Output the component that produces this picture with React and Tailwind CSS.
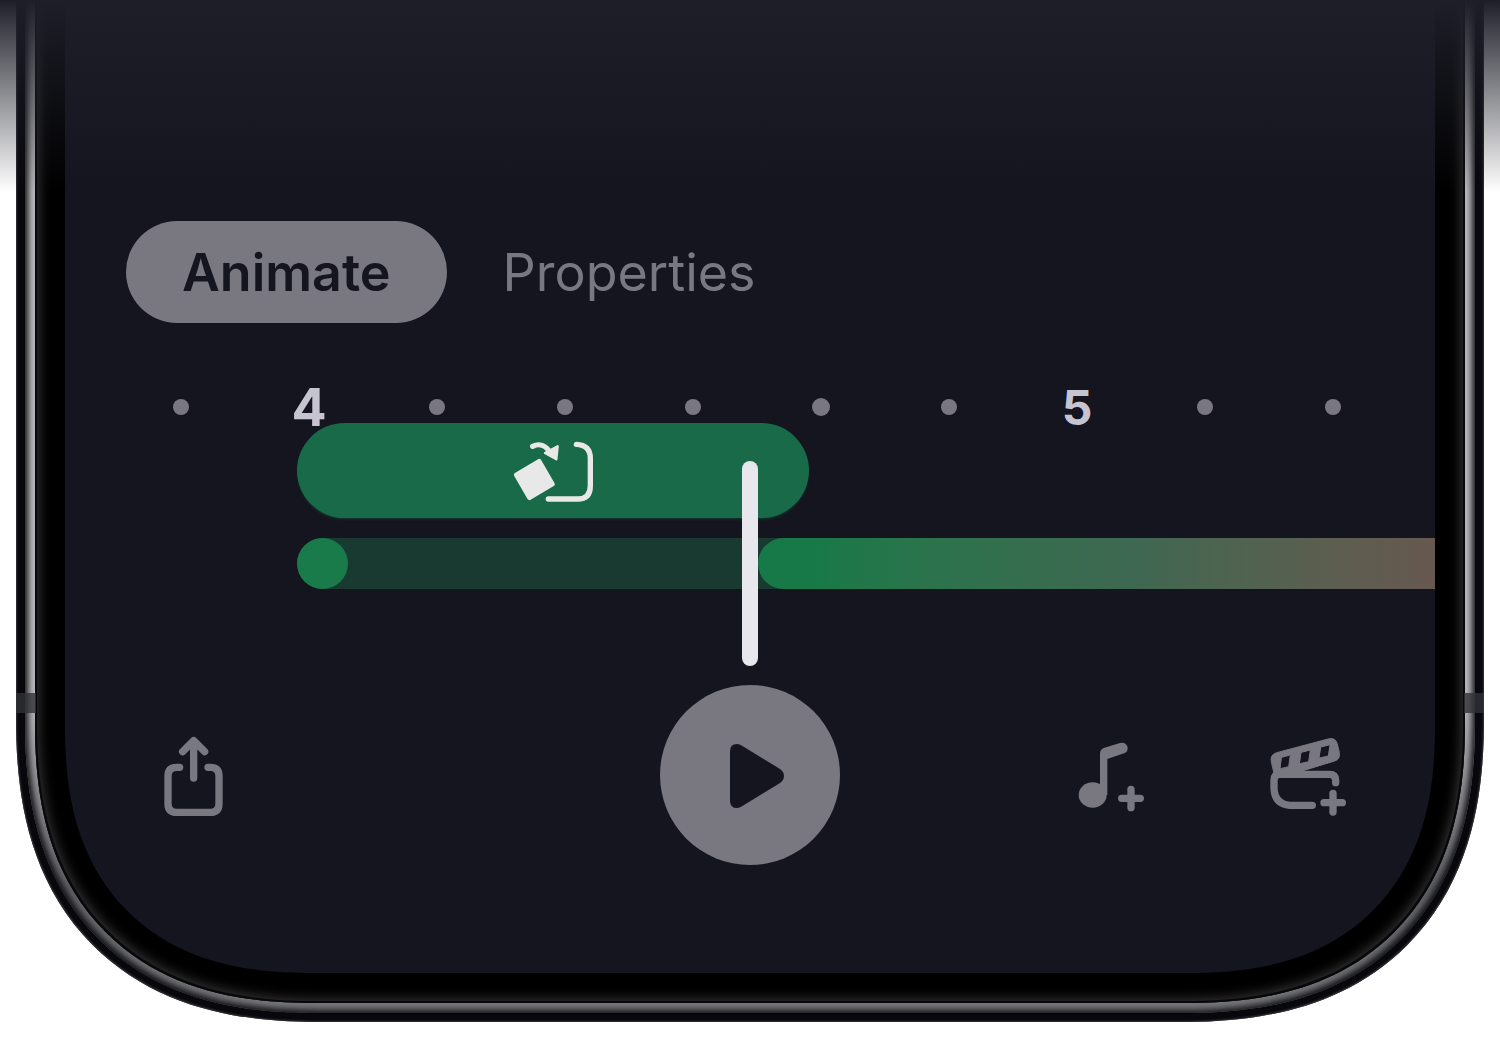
import React, { useState } from 'react';
import { clsx } from 'clsx';

const TICKS = [
    { id: 39 },
    { id: 40, label: '4', current: true },
    { id: 41 },
    { id: 42 },
    { id: 43 },
    { id: 44, half: true },
    { id: 45 },
    { id: 50, label: '5' },
    { id: 51 },
    { id: 52 }
];

const TABS = ['Animate', 'Properties'];

const ShareIcon = () => (
    <svg viewBox="71 46 177 240" className="w-[59px] h-20" fill="none" stroke="currentColor" strokeWidth="22" strokeLinecap="round" strokeLinejoin="round" aria-hidden="true">
        <path d="M118 140H109Q83 140 83 166V249Q83 275 109 275H210Q236 275 236 249V166Q236 140 210 140H203" />
        <path d="M160 60V172M127 93L160 60L193 93" />
    </svg>
);

const PlayIcon = () => (
    <svg viewBox="270 222 162 192" className="w-[54px] h-16 ml-3.5" fill="currentColor" aria-hidden="true">
        <path d="M270 244Q270 222 291 222Q299 222 306 227L420 297Q432 305 432 318Q432 331 420 339L306 409Q299 414 291 414Q270 414 270 392Z" />
    </svg>
);

const AddMusicIcon = () => (
    <svg viewBox="54 69 198 210" className="w-[66px] h-[70px]" fill="currentColor" aria-hidden="true">
        <ellipse cx="98" cy="228" rx="42" ry="38" />
        <path d="M120 228V104Q120 90 133 86L180 72Q196 68 202 82Q206 97 192 103L142 120V228Z" />
        <path d="M185 238H241M213 211V266" fill="none" stroke="currentColor" strokeWidth="22" strokeLinecap="round" />
    </svg>
);

const AddClipIcon = () => (
    <svg viewBox="61 54 228 234" className="w-[76px] h-[78px]" fill="none" stroke="currentColor" strokeWidth="22" strokeLinecap="round" aria-hidden="true">
        <path
            fill="currentColor"
            strokeWidth="3"
            strokeLinejoin="round"
            fillRule="evenodd"
            d="M65 126Q60 104 81 98L235 57Q257 51 263 72L269 98Q272 118 255 123L150 155L76 168ZM96 112L122 105L117 140L92 146ZM155 97L182 90L177 125L150 131ZM214 81L241 74L236 108L209 114Z"
        />
        <path d="M258 188V181Q258 163 240 163H90Q73 163 73 180V205Q75 252 120 256H188" />
        <path d="M223 248H278M250 220V276" />
    </svg>
);

const RotateIcon = () => (
    <svg viewBox="66 64 240 183" className="w-20 h-[61px]" fill="none" stroke="currentColor" strokeWidth="16" strokeLinecap="round" strokeLinejoin="round" aria-hidden="true">
        <path fill="currentColor" d="M144 126L183 193L116 233L77 166Z" />
        <path d="M125 80C144 70 164 77 177 98" />
        <path fill="currentColor" strokeWidth="7" d="M200 80L196 119L162 100Z" />
        <path d="M256 74Q298 76 298 116V198Q298 238 260 238H172" />
    </svg>
);

const TabBar = ({ active, onChange }) => (
    <div role="tablist" className="flex px-[61px]">
        {TABS.map((name) => (
            <button
                key={name}
                type="button"
                role="tab"
                aria-selected={active === name}
                onClick={() => onChange(name)}
                className={clsx(
                    'h-[102px] px-14 pt-0.5 rounded-full text-[52px] leading-none',
                    active === name ? 'bg-[#797880] text-[#15151f] font-semibold' : 'text-[#797880]'
                )}
            >
                {name}
            </button>
        ))}
    </div>
);

const Timeline = () => (
    <div className="relative mt-12 pt-5 overflow-x-clip">
        <div className="flex h-8 pl-[52px]">
            {TICKS.map((tick) => (
                <div key={tick.id} className="w-32 shrink-0 flex items-center justify-center">
                    {tick.label ? (
                        <span className={clsx('pt-0.5 leading-none font-bold text-[#c5c4d0]', tick.current ? 'text-[52px]' : 'text-5xl')}>
                            {tick.label}
                        </span>
                    ) : (
                        <span className={clsx('rounded-full bg-[#797880]', tick.half ? 'size-[18px]' : 'size-4')} />
                    )}
                </div>
            ))}
        </div>

        <div className="ml-[232px]">
            <div className="w-lg h-[95px] pt-0.5 rounded-full bg-[#196a48] text-[#e8e8e8] flex items-center justify-center shadow-[0_2px_3px_-1px_#143c2f]">
                <RotateIcon />
            </div>
            <div className="mt-5 h-[51px] flex rounded-l-full bg-[#183a31]">
                <span className="size-[51px] shrink-0 rounded-full bg-[#197a4a]" />
                <span className="ml-[410px] grow rounded-l-full bg-linear-to-r from-[#177948] from-8% via-[#3e6851] via-55% to-[#67584f]" />
            </div>
        </div>

        {/* playhead */}
        <div className="absolute left-1/2 top-[90px] -ml-2 w-4 h-[205px] rounded-full bg-[#e8e7ee]" />
    </div>
);

const Toolbar = ({ playing, onToggle }) => (
    <div className="mt-24 grid grid-cols-[1fr_auto_1fr] items-center px-[89px] text-[#797880]">
        <div className="flex pl-2.5 pt-0.5">
            <button type="button" aria-label="Share"><ShareIcon /></button>
        </div>
        <button
            type="button"
            aria-label={playing ? 'Pause' : 'Play'}
            onClick={onToggle}
            className="size-[180px] pt-0.5 rounded-full bg-[#797880] text-[#15151f] flex items-center justify-center"
        >
            <PlayIcon />
        </button>
        <div className="flex items-center justify-end gap-[126px] pt-1">
            <button type="button" aria-label="Add music"><AddMusicIcon /></button>
            <button type="button" aria-label="Add clip"><AddClipIcon /></button>
        </div>
    </div>
);

// Lower half of the phone: outer rim, steel band, bezel, then the screen.
// The top rim is pulled out of view so only the sides and the bottom show.
const Phone = ({ children }) => (
    <div className="relative mx-4 -mt-[49px] p-[9px] rounded-b-[304px] [corner-shape:superellipse(1.25)] bg-[#07070c] shadow-[inset_0_0_2px_1px_#35353a]">
        <div className="p-[10px] rounded-b-[292px] [corner-shape:superellipse(1.25)] bg-linear-to-b from-[#b8b8ba] from-70% via-[#606165] via-88% to-[#78797b] shadow-[inset_0_0_6px_3px_#101014]">
            <div className="p-[30px] rounded-b-[280px] [corner-shape:superellipse(1.25)] bg-black shadow-[inset_0_0_0_2px_#08080a,inset_0_0_12px_4px_#343434]">
                <div className="rounded-b-[246px] [corner-shape:superellipse(1.25)] overflow-hidden bg-[#15151f]">
                    {children}
                </div>
            </div>
        </div>
        <span className="absolute left-0 top-[742px] w-5 h-5 bg-[#303236]/80" />
        <span className="absolute right-0 top-[742px] w-5 h-5 bg-[#303236]/80" />
    </div>
);

export default function App() {
    const [tab, setTab] = useState('Animate');
    const [playing, setPlaying] = useState(false);

    return (
        <main className="relative flow-root overflow-hidden min-h-screen bg-white font-['Inter',sans-serif]">
            <Phone>
                <div className="pt-[221px] pb-[108px]">
                    <TabBar active={tab} onChange={setTab} />
                    <Timeline />
                    <Toolbar playing={playing} onToggle={() => setPlaying(!playing)} />
                </div>
            </Phone>
            <div className="absolute inset-x-0 top-0 h-48 pointer-events-none bg-linear-to-b from-[#1d1e28] to-[#1d1e28]/0" />
        </main>
    );
}
